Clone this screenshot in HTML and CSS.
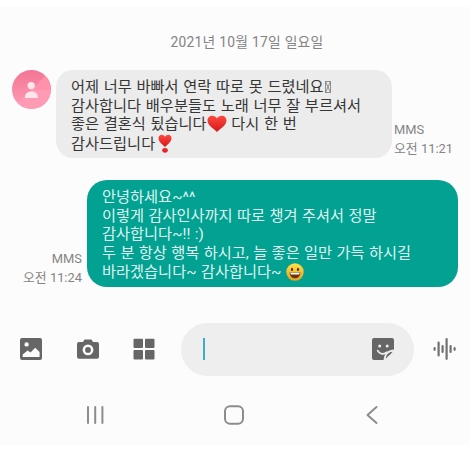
FILE: index.html
```
<!DOCTYPE html>
<html lang="ko">
<head>
<meta charset="utf-8">
<title>메시지</title>
<link rel="stylesheet" href="styles.css">
</head>
<body>
<main class="screen">
  <div class="date">2021년 10월 17일 일요일</div>
  <section class="row received">
    <svg class="avatar" viewBox="0 0 39 39">
      <defs>
        <linearGradient id="pink" x1="0" y1="0" x2="0" y2="1"><stop offset="0" stop-color="#f37594"/><stop offset="1" stop-color="#ff9db6"/></linearGradient>
        <clipPath id="disc"><circle cx="19.5" cy="19.5" r="19.5"/></clipPath>
      </defs>
      <g clip-path="url(#disc)">
        <path d="M0 0H39V39H0Z" fill="url(#pink)"/>
        <path d="M19 20 39 0V20Z" fill="#ff91ac"/>
        <path d="M19 20H39V39H0Z" fill="#ff9bb4"/>
      </g>
      <circle cx="19.2" cy="15.6" r="3.7" fill="#ffe6ed"/>
      <path d="M13 28V26.8C13 19.8 25.8 19.8 25.8 26.8V28Z" fill="#ffe6ed"/>
    </svg>
    <div class="bubble incoming">
      <p>어제 너무 바빠서 연락 따로 못 드렸네요<svg class="missing" viewBox="0 0 6 12"><path d="M.5.5H5.5V11.5H.5ZM.5.5 5.5 11.5M5.5.5.5 11.5"/></svg></p>
      <p>감사합니다 배우분들도 노래 너무 잘 부르셔서</p>
      <p>좋은 결혼식 됬습니다<svg class="heart" viewBox="0 0 20 18"><defs><linearGradient id="red" x1="0" y1="0" x2="0" y2="1"><stop stop-color="#fb4a40"/><stop offset="1" stop-color="#d81519"/></linearGradient></defs><path d="M10 17C7 14 .5 10.5.5 5.6.5 0 7.6-.8 10 3.6 12.4-.8 19.5 0 19.5 5.6 19.5 10.5 13 14 10 17Z" fill="url(#red)"/></svg> 다시 한 번</p>
      <p>감사드립니다<svg class="exclaim" viewBox="0 0 14 19"><path d="M7 13C5 10.6.5 8 .5 4.2.5 0 5.4-.4 7 2.7 8.6-.4 13.5 0 13.5 4.2 13.5 8 9 10.6 7 13Z" fill="url(#red)"/><ellipse cx="7" cy="16.3" rx="2.8" ry="2.4" fill="#e3262a"/></svg></p>
    </div>
    <div class="meta"><span>MMS</span><span>오전 11:21</span></div>
  </section>
  <section class="row sent">
    <div class="meta"><span>MMS</span><span>오전 11:24</span></div>
    <div class="bubble outgoing">
      <p>안녕하세요~^^</p>
      <p>이렇게 감사인사까지 따로 챙겨 주셔서 정말</p>
      <p>감사합니다~!! :)</p>
      <p>두 분 항상 행복 하시고, 늘 좋은 일만 가득 하시길</p>
      <p>바라겠습니다~ 감사합니다~ <svg class="smile" viewBox="0 0 18 18"><defs><linearGradient id="gold" x1="0" y1="0" x2="0" y2="1"><stop stop-color="#ffe04b"/><stop offset="1" stop-color="#eba01d"/></linearGradient></defs><circle cx="9" cy="9" r="8.7" fill="url(#gold)"/><ellipse cx="6" cy="6.4" rx="1.1" ry="1.7" fill="#593412"/><ellipse cx="12" cy="6.4" rx="1.1" ry="1.7" fill="#593412"/><path d="M3.6 9.4H14.4C14.4 17.2 3.6 17.2 3.6 9.4Z" fill="#70320f"/><path d="M4.3 9.7H13.7L13.2 11.4H4.8Z" fill="#fff"/></svg></p>
    </div>
  </section>
  <section class="composer">
    <svg class="tool" viewBox="0 0 22 22"><path fill-rule="evenodd" d="M2 0H20Q22 0 22 2V20Q22 22 20 22H2Q0 22 0 20V2Q0 0 2 0ZM6.6 4.2A2.2 2.2 0 1 0 6.6 8.6 2.2 2.2 0 1 0 6.6 4.2ZM2.7 19H19.6V14L15.2 9.8 10.5 14.6 7.6 12.5 2.7 16.5Z"/></svg>
    <svg class="tool" viewBox="0 0 22 22"><path fill-rule="evenodd" d="M2 4H6L7.5 1.4H14.5L16 4H20Q22 4 22 6V18.7Q22 20.7 20 20.7H2Q0 20.7 0 18.7V6Q0 4 2 4ZM11 6.5A5.4 5.4 0 1 0 11 17.3 5.4 5.4 0 1 0 11 6.5Z"/><circle cx="11" cy="11.9" r="2.9"/></svg>
    <svg class="tool" viewBox="0 0 22 22"><rect x=".5" y=".7" width="9.5" height="9.4" rx="1"/><rect x="12" y=".7" width="9.5" height="9.4" rx="1"/><rect x=".5" y="12" width="9.5" height="9.4" rx="1"/><rect x="12" y="12" width="9.5" height="9.4" rx="1"/></svg>
    <div class="field">
      <span class="caret"></span>
      <svg class="tool" viewBox="0 0 22 22"><path d="M2 0H20Q22 0 22 2V11.5C16.5 11.5 12 15.5 11.6 22H2Q0 22 0 20V2Q0 0 2 0Z"/><path d="M13.8 20.8C14.3 16.8 16 14.3 20.6 13.8 20 14.8 19 15.4 18.6 16.2 16.6 17.2 15.5 19.2 13.8 20.8Z"/><g class="face"><circle cx="7.7" cy="8" r="1.5"/><circle cx="15.2" cy="8" r="1.5"/><path d="M5.7 12.6C7.3 16.2 12 17 15 14.2"/></g></svg>
    </div>
    <svg class="wave" viewBox="0 0 24 22"><path d="M1.6 10.2V11.8M5.6 4.6V17.4M9.6 8V14M13.6 1.2V20.8M17.6 8V14M21.6 10.2V11.8"/></svg>
  </section>
  <nav class="nav">
    <svg viewBox="0 0 20 20"><path d="M2 2V18M9.2 2V18M16.4 2V18"/></svg>
    <svg viewBox="0 0 20 20"><rect x="1" y="1.3" width="18" height="17.4" rx="5"/></svg>
    <svg viewBox="0 0 20 20"><path d="M14.5 2 5.5 10 14.5 18"/></svg>
  </nav>
</main>
</body>
</html>
```
FILE: styles.css
```
* { box-sizing: border-box; }
body {
  margin: 0;
  padding-top: 7px;
  background: #fff;
  font-family: Roboto, "Noto Sans CJK KR", sans-serif;
}
.screen {
  width: 470px;
  height: 438px;
  background: #fcfcfc;
  overflow: hidden;
}
.date {
  margin-top: 25px;
  padding-left: 24px;
  height: 20px;
  line-height: 20px;
  text-align: center;
  font-size: 13.8px;
  letter-spacing: 0.27px;
  color: #838383;
}
.row { display: flex; }
.received { margin-top: 18px; padding-left: 12px; }
.avatar { width: 39px; height: 39px; margin-right: 5px; flex: none; }
.bubble {
  padding: 8px 0 0 15px;
  font-size: 15.25px;
  line-height: 18.7px;
  word-spacing: 0.9px;
  white-space: nowrap;
}
.bubble p { margin: 0; height: 18.7px; }
.incoming {
  width: 336px;
  height: 88px;
  border-radius: 17px;
  background: #ececec;
  color: #363636;
}
.outgoing {
  width: 371px;
  height: 107px;
  border-radius: 20px;
  background: #03a191;
  color: #dff5f1;
  word-spacing: 0.6px;
}
.meta {
  display: flex;
  flex-direction: column;
  justify-content: flex-end;
  font-size: 12.9px;
  line-height: 18.8px;
  color: #858585;
  white-space: nowrap;
}
.meta span { position: relative; top: 1px; }
.received .meta { padding-left: 2px; }
.sent { margin-top: 22px; padding-left: 20px; }
.sent .meta { width: 67px; padding-right: 5px; text-align: right; }
.missing {
  width: 6px;
  height: 12px;
  margin-left: 1px;
  vertical-align: -1px;
  fill: none;
  stroke: #777;
  stroke-width: 0.8;
}
.heart { width: 20px; height: 18px; vertical-align: -4px; }
.exclaim { width: 14px; height: 19px; margin-left: 3px; vertical-align: -4px; }
.smile { width: 18px; height: 18px; vertical-align: -4px; }
.composer {
  display: flex;
  align-items: center;
  height: 54px;
  margin-top: 35px;
  padding-left: 20px;
}
.tool { width: 22px; height: 22px; flex: none; fill: #666; }
.composer > .tool { margin-right: 34.5px; }
.field {
  display: flex;
  align-items: center;
  justify-content: space-between;
  width: 233px;
  height: 53px;
  margin-left: -8.5px;
  padding: 0 20px 0 22px;
  border-radius: 27px;
  background: #eee;
}
.caret { width: 2px; height: 22px; background: #43a9c9; }
.face { fill: #eee; }
.face path { fill: none; stroke: #eee; stroke-width: 1.7; stroke-linecap: round; }
.wave {
  width: 24px;
  height: 22px;
  margin-left: 19px;
  fill: none;
  stroke: #717171;
  stroke-width: 2.2;
  stroke-linecap: round;
}
.nav {
  display: flex;
  justify-content: space-between;
  margin-top: 29px;
  padding: 0 88px 0 86px;
}
.nav svg {
  width: 20px;
  height: 20px;
  fill: none;
  stroke: #8c8c8c;
  stroke-width: 2;
  stroke-linecap: round;
  stroke-linejoin: round;
}
```
